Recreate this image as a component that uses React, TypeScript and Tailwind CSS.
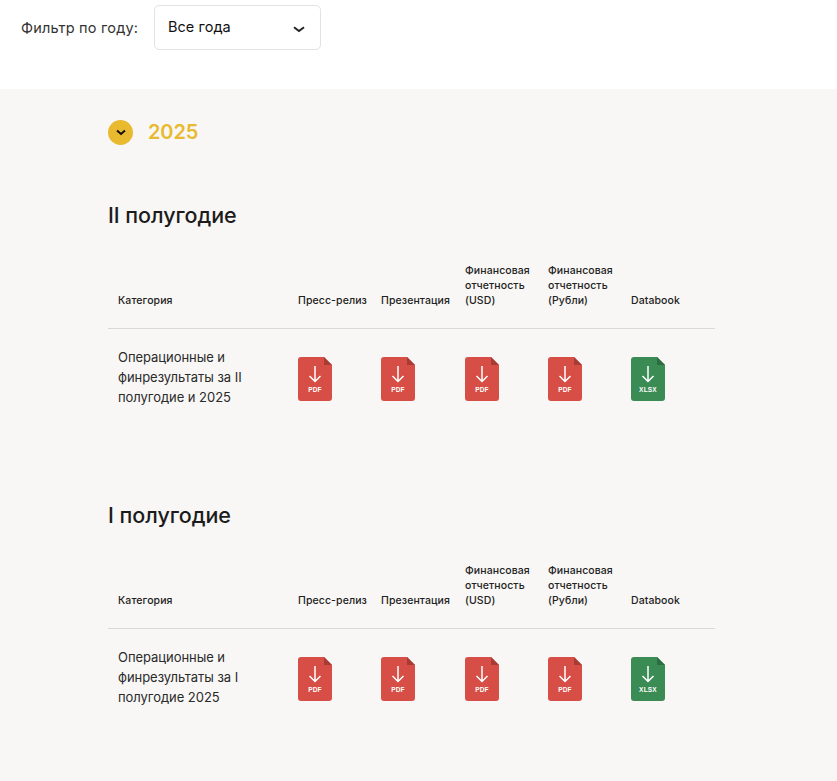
const font = "font-['Inter','Noto_Sans',sans-serif]";

function FileIcon({ kind }: { kind: "PDF" | "XLSX" }) {
  const body = kind === "PDF" ? "#d64e45" : "#3b8b55";
  const fold = kind === "PDF" ? "#a83b34" : "#2c6d41";
  return (
    <div className="relative w-[34px] h-[44px]">
      <svg width="34" height="44" viewBox="0 0 34 44" className="block">
        <path d="M3 0H26L34 8V41a3 3 0 0 1-3 3H3a3 3 0 0 1-3-3V3a3 3 0 0 1 3-3Z" fill={body} />
        <path d="M26 0L34 8H26Z" fill={fold} />
        <path d="M17 9V24.5M11.5 19L17 24.5L22.5 19" fill="none" stroke="#fff" strokeWidth="1.5" />
      </svg>
      <span className="absolute left-0 right-0 top-[28px] text-center text-[6.5px] leading-[9px] font-bold text-white font-['Liberation_Sans',sans-serif] tracking-[0.2px]">
        {kind}
      </span>
    </div>
  );
}

function Head({ children }: { children: React.ReactNode }) {
  return <div className="pl-[10px] self-end text-[10.5px] leading-[15px] font-medium text-[#222] tracking-[0.1px]">{children}</div>;
}

function Section({ title, lines }: { title: string; lines: string[] }) {
  const cols = "grid grid-cols-[180px_83px_84px_83px_83px_94px]";
  return (
    <section className="h-[300px]">
      <h2 className="text-[21.5px] leading-[28px] font-medium text-[#1c1c1c] tracking-[-0.05px]">{title}</h2>
      <div className={`${cols} mt-[21px] h-[79px] pb-[20px] border-b border-[#d9d9d9] w-[607px]`}>
        <Head>Категория</Head>
        <Head>Пресс-релиз</Head>
        <Head>Презентация</Head>
        <Head>Финансовая отчетность (USD)</Head>
        <Head>Финансовая отчетность (Рубли)</Head>
        <Head>Databook</Head>
      </div>
      <div className={`${cols} w-[607px] pt-[18px]`}>
        <div className="pl-[10px] text-[13px] leading-[20px] text-[#2a2a2a] tracking-[-0.05px]">
          {lines.map((l) => <div key={l}>{l}</div>)}
        </div>
        {(["PDF", "PDF", "PDF", "PDF", "XLSX"] as const).map((k, i) => (
          <div key={i} className="pl-[10px] pt-[10px]"><FileIcon kind={k} /></div>
        ))}
      </div>
    </section>
  );
}

export default function App() {
  return (
    <div className={`${font} w-[837px] h-[781px] overflow-hidden bg-white`}>
      <div className="h-[89px] pt-[5px] pl-[21px] flex items-start gap-[15px]">
        <span className="w-[118px] h-[45px] flex items-center text-[14.5px] tracking-[0.2px] text-[#333] whitespace-nowrap">Фильтр по году:</span>
        <div className="w-[167px] h-[45px] rounded-[5px] border border-[#e3e3e3] flex items-center justify-between pl-[13px] pr-[15px]">
          <span className="text-[14.5px] text-[#111] -mt-[1px] tracking-[0.05px]">Все года</span>
          <svg width="12" height="7" viewBox="0 0 12 7" className="mt-[3px]">
            <path d="M1 1.2L6 5L11 1.2" fill="none" stroke="#222" strokeWidth="2" />
          </svg>
        </div>
      </div>
      <main className="bg-[#f8f7f5] h-[692px] pl-[108px] pt-[31px]">
        <div className="flex items-center gap-[15px] h-[25px]">
          <div className="w-[25px] h-[25px] rounded-full bg-[#e9b92f] flex items-center justify-center">
            <svg width="10" height="7" viewBox="0 0 10 7">
              <path d="M1 1.5L5 5L9 1.5" fill="none" stroke="#111" strokeWidth="2" />
            </svg>
          </div>
          <span className="text-[20px] font-semibold text-[#e9b92f] tracking-[-0.1px] -mt-[1px]">2025</span>
        </div>
        <div className="mt-[56px]">
          <Section title="II полугодие" lines={["Операционные и", "финрезультаты за II", "полугодие и 2025"]} />
          <Section title="I полугодие" lines={["Операционные и", "финрезультаты за I", "полугодие 2025"]} />
        </div>
      </main>
    </div>
  );
}
